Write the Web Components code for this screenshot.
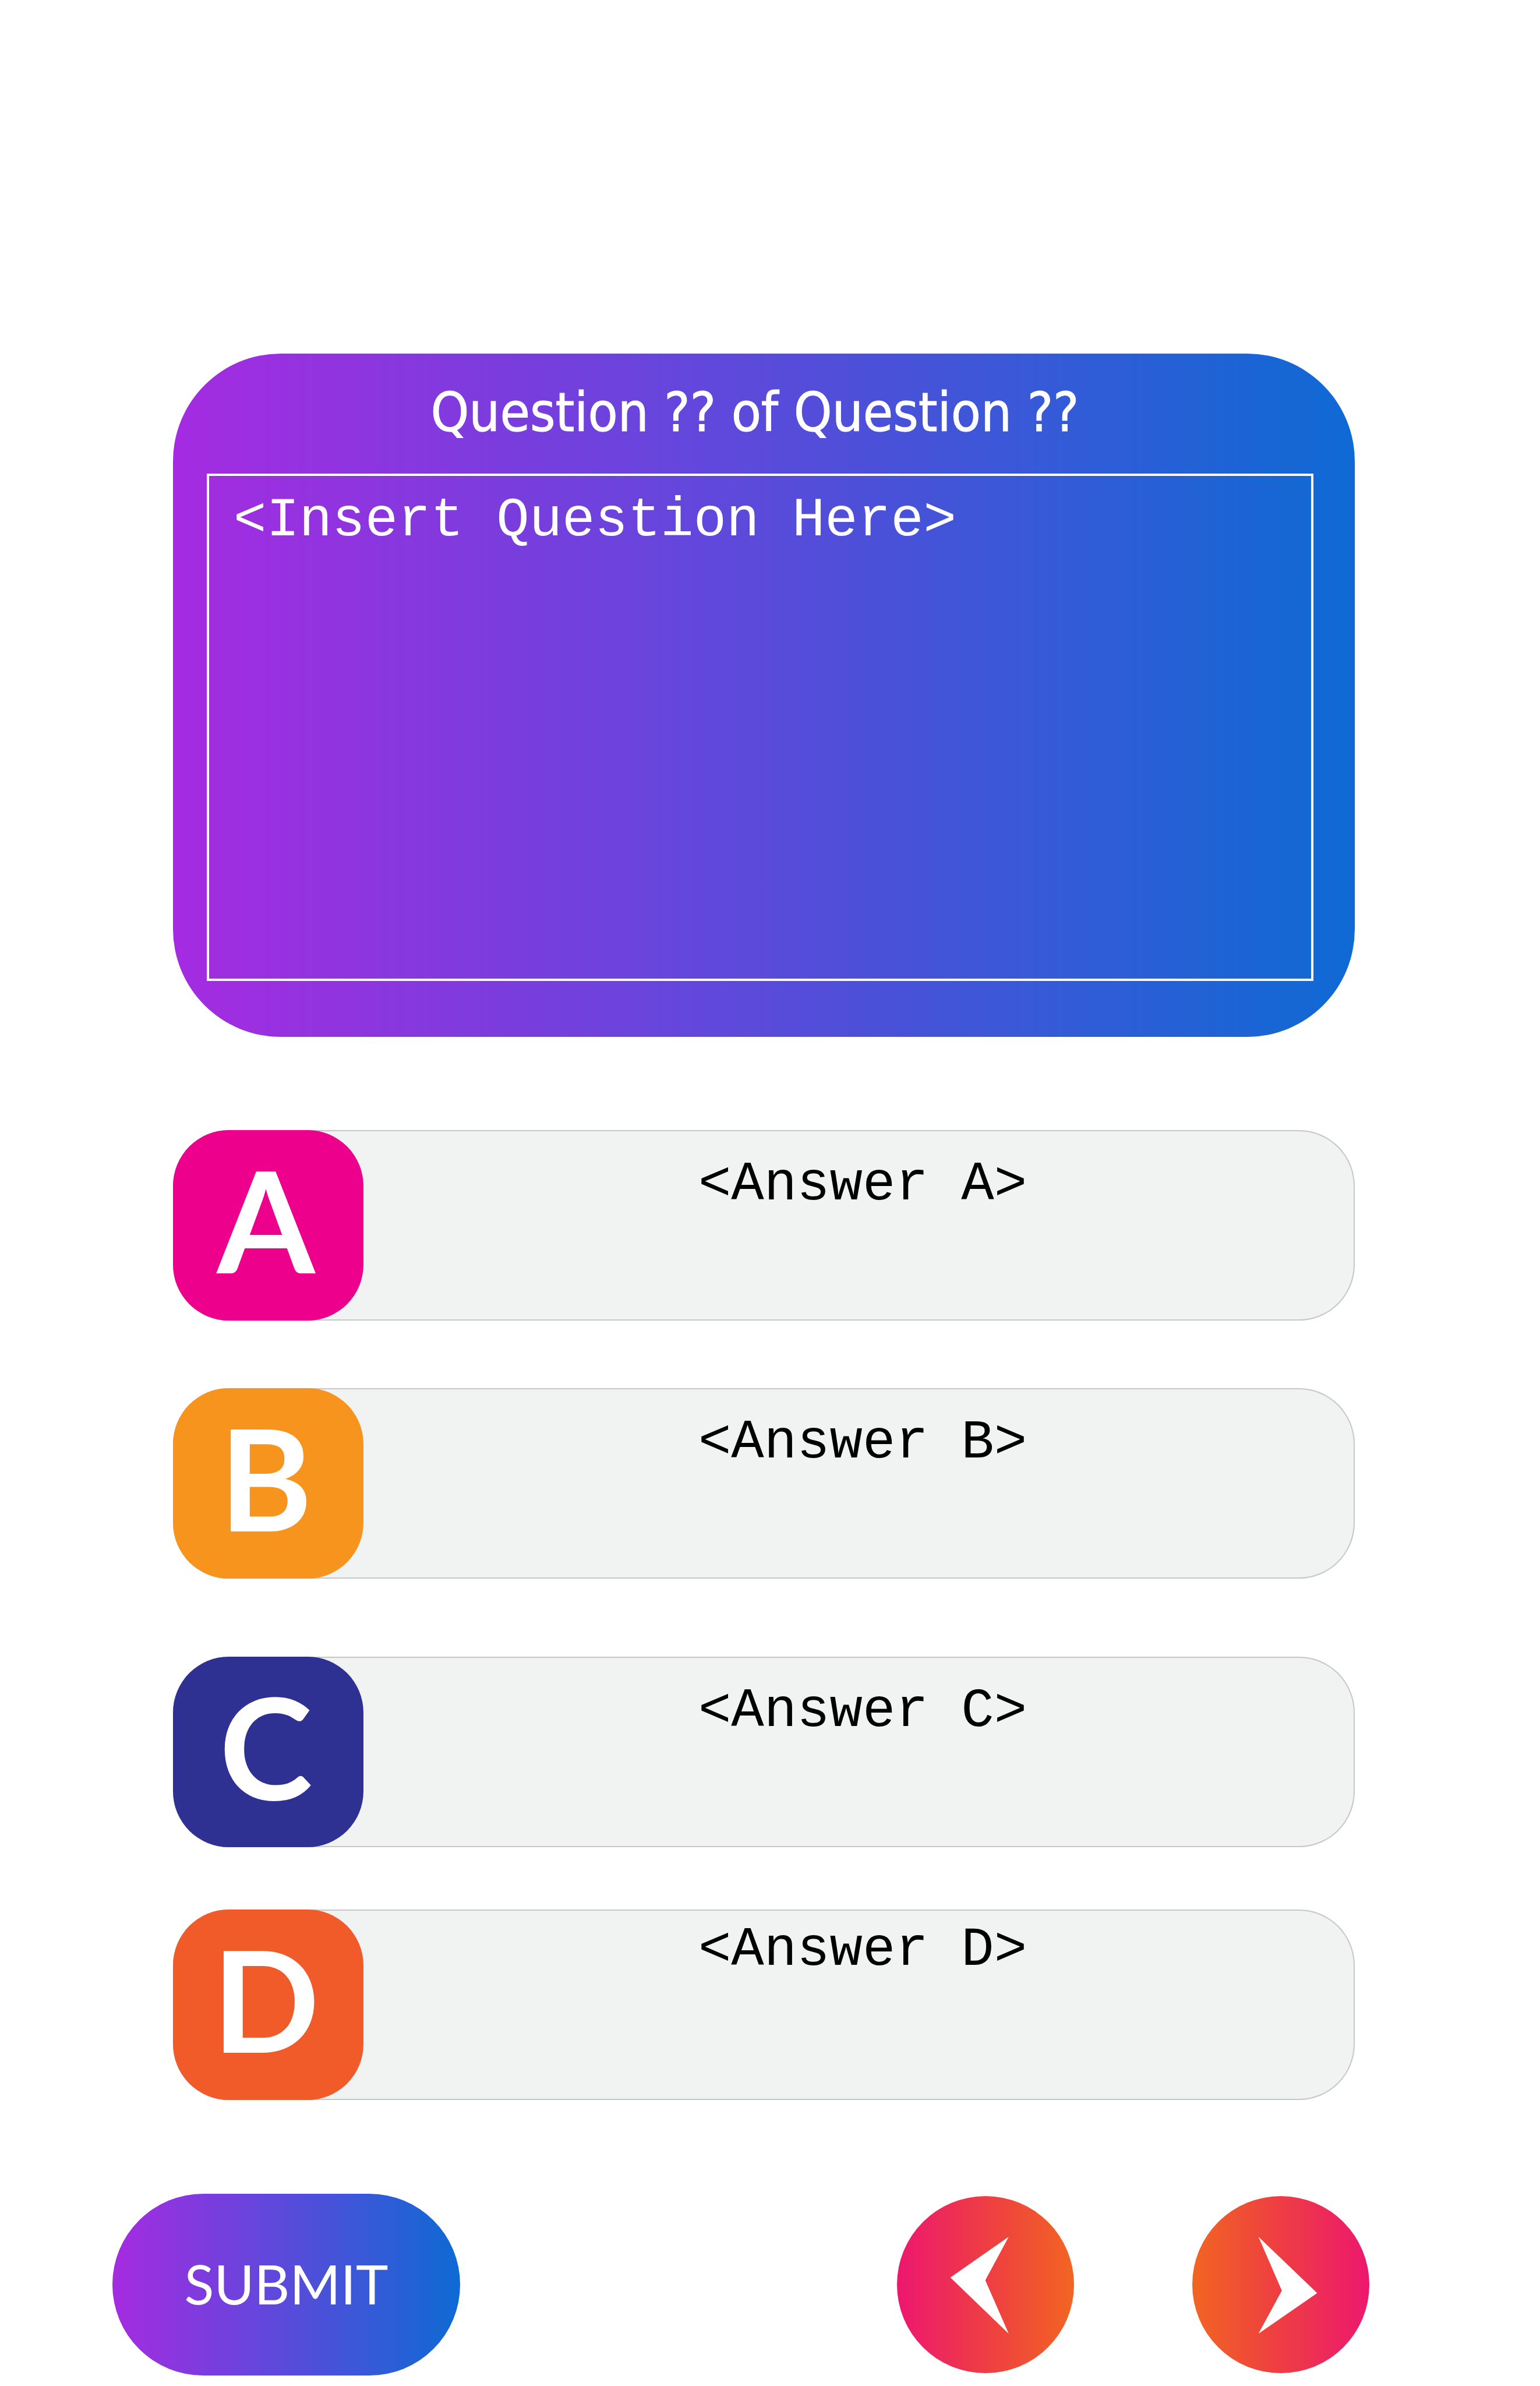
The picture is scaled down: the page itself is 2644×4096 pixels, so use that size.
<!DOCTYPE html>
<html lang="en">
<head>
<meta charset="utf-8">
<meta name="viewport" content="width=device-width, initial-scale=1">
<title>Quiz question</title>
<style>
  body { margin: 0; background: #fff; }
</style>
</head>
<body>
<quiz-page>
  <question-card slot="question">
    <span slot="progress">Question ?? of Question ??</span>
    &lt;Insert Question Here&gt;
  </question-card>
  <answer-option slot="a" letter="A" style="--badge:#ec008c">&lt;Answer A&gt;</answer-option>
  <answer-option slot="b" letter="B" style="--badge:#f7941d">&lt;Answer B&gt;</answer-option>
  <answer-option slot="c" letter="C" style="--badge:#2e3192">&lt;Answer C&gt;</answer-option>
  <answer-option slot="d" letter="D" compact style="--badge:#f15a29">&lt;Answer D&gt;</answer-option>
  <submit-button slot="submit">SUBMIT</submit-button>
  <nav-button slot="nav" direction="previous"></nav-button>
  <nav-button slot="nav" direction="next"></nav-button>
</quiz-page>

<script>
class Base extends HTMLElement {
  constructor() {
    super();
    this.attachShadow({ mode: "open" });
  }
  connectedCallback() {
    this.shadowRoot.innerHTML = this.render();
  }
}

customElements.define("quiz-page", class extends Base {
  render() {
    return `
    <style>
      :host { display: block; }
      main { display: flex; flex-direction: column; padding: 607px 0 18px; }
      section { display: flex; flex-direction: column; margin: 0 318px 0 297px; }
      .answers { padding: 160px 0 161px; }
      .a { margin-bottom: 116px; }
      .b { margin-bottom: 134px; }
      .c { margin-bottom: 107px; }
      footer { display: flex; align-items: center; justify-content: space-between; margin: 0 293px 0 193px; }
      nav { display: flex; gap: 203px; }
    </style>
    <main>
      <section><slot name="question"></slot></section>
      <section class="answers">
        <div class="a"><slot name="a"></slot></div>
        <div class="b"><slot name="b"></slot></div>
        <div class="c"><slot name="c"></slot></div>
        <div><slot name="d"></slot></div>
      </section>
      <footer>
        <slot name="submit"></slot>
        <nav><slot name="nav"></slot></nav>
      </footer>
    </main>`;
  }
});

customElements.define("question-card", class extends Base {
  render() {
    return `
    <style>
      :host {
        display: block; box-sizing: border-box; padding: 47px 71px 96px 58px;
        border-radius: 185px; color: #fff;
        background: linear-gradient(90deg, #a52be1, #0e6ad4);
      }
      h1 {
        margin: 0 0 51px; padding-right: 18px; text-align: center; font-weight: 400;
        font-size: 93px; line-height: 108px; -webkit-text-stroke: 1px #fff;
        font-family: "DejaVu Sans Condensed", "DejaVu Sans", sans-serif; font-stretch: condensed;
      }
      .question {
        box-sizing: border-box; min-height: 871px; margin: 0; padding: 24px 42px;
        border: 4px solid #fff;
        font: 94px/106px "Liberation Mono", monospace;
      }
    </style>
    <h1><slot name="progress"></slot></h1>
    <p class="question"><slot></slot></p>`;
  }
});

customElements.define("answer-option", class extends Base {
  render() {
    return `
    <style>
      :host { display: block; }
      button {
        display: flex; box-sizing: border-box; width: 100%; height: 327px; margin: 0; padding: 0;
        border: 0; border-radius: 96px; background: #f1f3f2; color: #000;
        box-shadow: inset 0 0 0 2px #c6c7ca; cursor: pointer; text-align: center;
      }
      .badge {
        flex: none; box-sizing: border-box; width: 327px; height: 327px; padding: 0 8px 22px 0;
        display: flex; align-items: center; justify-content: center;
        border-radius: 96px; background: var(--badge); color: #fff;
        font: 700 242px/290px Lato, sans-serif;
      }
      .text {
        flex: 1; padding: 41px 0 0 12px;
        font: 94px/106px "Liberation Mono", monospace;
      }
      :host([compact]) .text { padding-top: 17px; }
    </style>
    <button type="button">
      <span class="badge">${this.getAttribute("letter")}</span>
      <span class="text"><slot></slot></span>
    </button>`;
  }
});

customElements.define("submit-button", class extends Base {
  render() {
    return `
    <style>
      :host { display: block; }
      button {
        display: flex; align-items: center; justify-content: center;
        width: 597px; height: 312px; padding: 0 0 4px; border: 0; border-radius: 156px;
        background: linear-gradient(90deg, #a52be1, #0e6ad4); color: #fff; cursor: pointer;
        font: 400 94px/112px Lato, sans-serif;
      }
    </style>
    <button type="submit"><slot></slot></button>`;
  }
});

customElements.define("nav-button", class extends Base {
  render() {
    const next = this.getAttribute("direction") === "next";
    const colours = next ? "#f26522, #ee4040 46%, #ed176f" : "#ed176f, #ee4040 54%, #f26522";
    const points = next ? "161,99 304,236 161,335 218,230" : "272,99 130,198 272,335 215,205";
    return `
    <style>
      :host { display: block; }
      button {
        display: block; width: 304px; height: 304px; padding: 0; border: 0; border-radius: 50%;
        background: linear-gradient(90deg, ${colours}); cursor: pointer;
      }
      svg { display: block; width: 100%; height: 100%; }
    </style>
    <button type="button" aria-label="${next ? "Next question" : "Previous question"}">
      <svg viewBox="0 0 431 431" aria-hidden="true"><polygon points="${points}" fill="#fff"/></svg>
    </button>`;
  }
});
</script>
</body>
</html>
